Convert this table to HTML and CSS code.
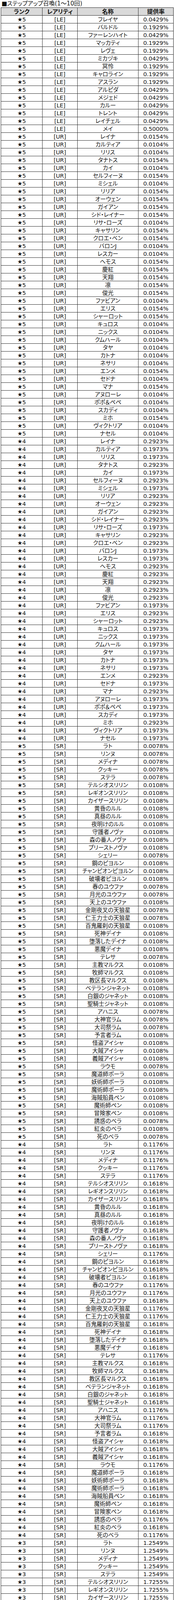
FILE: index.html
```html
<!DOCTYPE html>
<html lang="ja">
<head>
<meta charset="utf-8">
<title>ステップアップ召喚(1～10回)</title>
<link rel="stylesheet" href="styles.css">
</head>
<body>
<h2 class="title">■ステップアップ召喚(1～10回)</h2>
<div class="rates" role="table">
<div class="r head" role="row"><span role="columnheader">ランク</span><span role="columnheader">レアリティ</span><span role="columnheader">名称</span><span role="columnheader">提供率</span></div>
<div class="r" role="row"><span>★5</span><span>[LE]</span><span>フレイヤ</span><span>0.0429%</span></div>
<div class="r" role="row"><span>★5</span><span>[LE]</span><span>バルドル</span><span>0.1929%</span></div>
<div class="r" role="row"><span>★5</span><span>[LE]</span><span>ファーレンハイト</span><span>0.0429%</span></div>
<div class="r" role="row"><span>★5</span><span>[LE]</span><span>マッカティ</span><span>0.1929%</span></div>
<div class="r" role="row"><span>★5</span><span>[LE]</span><span>レヴェ</span><span>0.1929%</span></div>
<div class="r" role="row"><span>★5</span><span>[LE]</span><span>ミカヅキ</span><span>0.0429%</span></div>
<div class="r" role="row"><span>★5</span><span>[LE]</span><span>冥怜</span><span>0.1929%</span></div>
<div class="r" role="row"><span>★5</span><span>[LE]</span><span>キャロライン</span><span>0.1929%</span></div>
<div class="r" role="row"><span>★5</span><span>[LE]</span><span>アスラン</span><span>0.1929%</span></div>
<div class="r" role="row"><span>★5</span><span>[LE]</span><span>アルピダ</span><span>0.0429%</span></div>
<div class="r" role="row"><span>★5</span><span>[LE]</span><span>メジェド</span><span>0.0429%</span></div>
<div class="r" role="row"><span>★5</span><span>[LE]</span><span>カルー</span><span>0.0429%</span></div>
<div class="r" role="row"><span>★5</span><span>[LE]</span><span>トレント</span><span>0.0429%</span></div>
<div class="r" role="row"><span>★5</span><span>[LE]</span><span>レイチェル</span><span>0.0429%</span></div>
<div class="r" role="row"><span>★5</span><span>[LE]</span><span>メイ</span><span>0.5000%</span></div>
<div class="r" role="row"><span>★5</span><span>[UR]</span><span>レイナ</span><span>0.0154%</span></div>
<div class="r" role="row"><span>★5</span><span>[UR]</span><span>カルティア</span><span>0.0104%</span></div>
<div class="r" role="row"><span>★5</span><span>[UR]</span><span>リリス</span><span>0.0104%</span></div>
<div class="r" role="row"><span>★5</span><span>[UR]</span><span>タナトス</span><span>0.0154%</span></div>
<div class="r" role="row"><span>★5</span><span>[UR]</span><span>カイ</span><span>0.0104%</span></div>
<div class="r" role="row"><span>★5</span><span>[UR]</span><span>セルフィーヌ</span><span>0.0154%</span></div>
<div class="r" role="row"><span>★5</span><span>[UR]</span><span>ミシェル</span><span>0.0104%</span></div>
<div class="r" role="row"><span>★5</span><span>[UR]</span><span>リリア</span><span>0.0154%</span></div>
<div class="r" role="row"><span>★5</span><span>[UR]</span><span>オーウェン</span><span>0.0154%</span></div>
<div class="r" role="row"><span>★5</span><span>[UR]</span><span>ガイアン</span><span>0.0154%</span></div>
<div class="r" role="row"><span>★5</span><span>[UR]</span><span>シド・レイナー</span><span>0.0154%</span></div>
<div class="r" role="row"><span>★5</span><span>[UR]</span><span>リサ・ローズ</span><span>0.0104%</span></div>
<div class="r" role="row"><span>★5</span><span>[UR]</span><span>キャサリン</span><span>0.0154%</span></div>
<div class="r" role="row"><span>★5</span><span>[UR]</span><span>クロエ・ベン</span><span>0.0154%</span></div>
<div class="r" role="row"><span>★5</span><span>[UR]</span><span>バロンJ</span><span>0.0104%</span></div>
<div class="r" role="row"><span>★5</span><span>[UR]</span><span>レスカー</span><span>0.0104%</span></div>
<div class="r" role="row"><span>★5</span><span>[UR]</span><span>ヘモス</span><span>0.0154%</span></div>
<div class="r" role="row"><span>★5</span><span>[UR]</span><span>慶紅</span><span>0.0154%</span></div>
<div class="r" role="row"><span>★5</span><span>[UR]</span><span>天翔</span><span>0.0154%</span></div>
<div class="r" role="row"><span>★5</span><span>[UR]</span><span>凛</span><span>0.0154%</span></div>
<div class="r" role="row"><span>★5</span><span>[UR]</span><span>俊光</span><span>0.0154%</span></div>
<div class="r" role="row"><span>★5</span><span>[UR]</span><span>ファビアン</span><span>0.0104%</span></div>
<div class="r" role="row"><span>★5</span><span>[UR]</span><span>エリス</span><span>0.0154%</span></div>
<div class="r" role="row"><span>★5</span><span>[UR]</span><span>シャーロット</span><span>0.0154%</span></div>
<div class="r" role="row"><span>★5</span><span>[UR]</span><span>キュロス</span><span>0.0104%</span></div>
<div class="r" role="row"><span>★5</span><span>[UR]</span><span>ニックス</span><span>0.0104%</span></div>
<div class="r" role="row"><span>★5</span><span>[UR]</span><span>クムハール</span><span>0.0104%</span></div>
<div class="r" role="row"><span>★5</span><span>[UR]</span><span>タヤ</span><span>0.0104%</span></div>
<div class="r" role="row"><span>★5</span><span>[UR]</span><span>カトナ</span><span>0.0104%</span></div>
<div class="r" role="row"><span>★5</span><span>[UR]</span><span>ネサリ</span><span>0.0104%</span></div>
<div class="r" role="row"><span>★5</span><span>[UR]</span><span>エンメ</span><span>0.0154%</span></div>
<div class="r" role="row"><span>★5</span><span>[UR]</span><span>セドナ</span><span>0.0104%</span></div>
<div class="r" role="row"><span>★5</span><span>[UR]</span><span>マナ</span><span>0.0154%</span></div>
<div class="r" role="row"><span>★5</span><span>[UR]</span><span>アヌローレ</span><span>0.0104%</span></div>
<div class="r" role="row"><span>★5</span><span>[UR]</span><span>ポポ＆ペペ</span><span>0.0104%</span></div>
<div class="r" role="row"><span>★5</span><span>[UR]</span><span>スカディ</span><span>0.0104%</span></div>
<div class="r" role="row"><span>★5</span><span>[UR]</span><span>ミホ</span><span>0.0154%</span></div>
<div class="r" role="row"><span>★5</span><span>[UR]</span><span>ヴィクトリア</span><span>0.0104%</span></div>
<div class="r" role="row"><span>★5</span><span>[UR]</span><span>ナセル</span><span>0.0104%</span></div>
<div class="r" role="row"><span>★4</span><span>[UR]</span><span>レイナ</span><span>0.2923%</span></div>
<div class="r" role="row"><span>★4</span><span>[UR]</span><span>カルティア</span><span>0.1973%</span></div>
<div class="r" role="row"><span>★4</span><span>[UR]</span><span>リリス</span><span>0.1973%</span></div>
<div class="r" role="row"><span>★4</span><span>[UR]</span><span>タナトス</span><span>0.2923%</span></div>
<div class="r" role="row"><span>★4</span><span>[UR]</span><span>カイ</span><span>0.1973%</span></div>
<div class="r" role="row"><span>★4</span><span>[UR]</span><span>セルフィーヌ</span><span>0.2923%</span></div>
<div class="r" role="row"><span>★4</span><span>[UR]</span><span>ミシェル</span><span>0.1973%</span></div>
<div class="r" role="row"><span>★4</span><span>[UR]</span><span>リリア</span><span>0.2923%</span></div>
<div class="r" role="row"><span>★4</span><span>[UR]</span><span>オーウェン</span><span>0.2923%</span></div>
<div class="r" role="row"><span>★4</span><span>[UR]</span><span>ガイアン</span><span>0.2923%</span></div>
<div class="r" role="row"><span>★4</span><span>[UR]</span><span>シド・レイナー</span><span>0.2923%</span></div>
<div class="r" role="row"><span>★4</span><span>[UR]</span><span>リサ・ローズ</span><span>0.1973%</span></div>
<div class="r" role="row"><span>★4</span><span>[UR]</span><span>キャサリン</span><span>0.2923%</span></div>
<div class="r" role="row"><span>★4</span><span>[UR]</span><span>クロエ・ベン</span><span>0.2923%</span></div>
<div class="r" role="row"><span>★4</span><span>[UR]</span><span>バロンJ</span><span>0.1973%</span></div>
<div class="r" role="row"><span>★4</span><span>[UR]</span><span>レスカー</span><span>0.1973%</span></div>
<div class="r" role="row"><span>★4</span><span>[UR]</span><span>ヘモス</span><span>0.2923%</span></div>
<div class="r" role="row"><span>★4</span><span>[UR]</span><span>慶紅</span><span>0.2923%</span></div>
<div class="r" role="row"><span>★4</span><span>[UR]</span><span>天翔</span><span>0.2923%</span></div>
<div class="r" role="row"><span>★4</span><span>[UR]</span><span>凛</span><span>0.2923%</span></div>
<div class="r" role="row"><span>★4</span><span>[UR]</span><span>俊光</span><span>0.2923%</span></div>
<div class="r" role="row"><span>★4</span><span>[UR]</span><span>ファビアン</span><span>0.1973%</span></div>
<div class="r" role="row"><span>★4</span><span>[UR]</span><span>エリス</span><span>0.2923%</span></div>
<div class="r" role="row"><span>★4</span><span>[UR]</span><span>シャーロット</span><span>0.2923%</span></div>
<div class="r" role="row"><span>★4</span><span>[UR]</span><span>キュロス</span><span>0.1973%</span></div>
<div class="r" role="row"><span>★4</span><span>[UR]</span><span>ニックス</span><span>0.1973%</span></div>
<div class="r" role="row"><span>★4</span><span>[UR]</span><span>クムハール</span><span>0.1973%</span></div>
<div class="r" role="row"><span>★4</span><span>[UR]</span><span>タヤ</span><span>0.1973%</span></div>
<div class="r" role="row"><span>★4</span><span>[UR]</span><span>カトナ</span><span>0.1973%</span></div>
<div class="r" role="row"><span>★4</span><span>[UR]</span><span>ネサリ</span><span>0.1973%</span></div>
<div class="r" role="row"><span>★4</span><span>[UR]</span><span>エンメ</span><span>0.2923%</span></div>
<div class="r" role="row"><span>★4</span><span>[UR]</span><span>セドナ</span><span>0.1973%</span></div>
<div class="r" role="row"><span>★4</span><span>[UR]</span><span>マナ</span><span>0.2923%</span></div>
<div class="r" role="row"><span>★4</span><span>[UR]</span><span>アヌローレ</span><span>0.1973%</span></div>
<div class="r" role="row"><span>★4</span><span>[UR]</span><span>ポポ＆ペペ</span><span>0.1973%</span></div>
<div class="r" role="row"><span>★4</span><span>[UR]</span><span>スカディ</span><span>0.1973%</span></div>
<div class="r" role="row"><span>★4</span><span>[UR]</span><span>ミホ</span><span>0.2923%</span></div>
<div class="r" role="row"><span>★4</span><span>[UR]</span><span>ヴィクトリア</span><span>0.1973%</span></div>
<div class="r" role="row"><span>★4</span><span>[UR]</span><span>ナセル</span><span>0.1973%</span></div>
<div class="r" role="row"><span>★5</span><span>[SR]</span><span>ラト</span><span>0.0078%</span></div>
<div class="r" role="row"><span>★5</span><span>[SR]</span><span>リンヌ</span><span>0.0078%</span></div>
<div class="r" role="row"><span>★5</span><span>[SR]</span><span>メディナ</span><span>0.0078%</span></div>
<div class="r" role="row"><span>★5</span><span>[SR]</span><span>クッキー</span><span>0.0078%</span></div>
<div class="r" role="row"><span>★5</span><span>[SR]</span><span>ステラ</span><span>0.0078%</span></div>
<div class="r" role="row"><span>★5</span><span>[SR]</span><span>テルシオスリリン</span><span>0.0108%</span></div>
<div class="r" role="row"><span>★5</span><span>[SR]</span><span>レギオンスリリン</span><span>0.0108%</span></div>
<div class="r" role="row"><span>★5</span><span>[SR]</span><span>カイザースリリン</span><span>0.0108%</span></div>
<div class="r" role="row"><span>★5</span><span>[SR]</span><span>黄昏のルル</span><span>0.0108%</span></div>
<div class="r" role="row"><span>★5</span><span>[SR]</span><span>真昼のルル</span><span>0.0108%</span></div>
<div class="r" role="row"><span>★5</span><span>[SR]</span><span>夜明けのルル</span><span>0.0108%</span></div>
<div class="r" role="row"><span>★5</span><span>[SR]</span><span>守護者ノヴァ</span><span>0.0108%</span></div>
<div class="r" role="row"><span>★5</span><span>[SR]</span><span>森の番人ノヴァ</span><span>0.0108%</span></div>
<div class="r" role="row"><span>★5</span><span>[SR]</span><span>プリーストノヴァ</span><span>0.0108%</span></div>
<div class="r" role="row"><span>★5</span><span>[SR]</span><span>シェリー</span><span>0.0078%</span></div>
<div class="r" role="row"><span>★5</span><span>[SR]</span><span>鋼のピヨルン</span><span>0.0108%</span></div>
<div class="r" role="row"><span>★5</span><span>[SR]</span><span>チャンピオンピヨルン</span><span>0.0108%</span></div>
<div class="r" role="row"><span>★5</span><span>[SR]</span><span>破壊者ピヨルン</span><span>0.0108%</span></div>
<div class="r" role="row"><span>★5</span><span>[SR]</span><span>春のユウファ</span><span>0.0078%</span></div>
<div class="r" role="row"><span>★5</span><span>[SR]</span><span>月光のユウファ</span><span>0.0078%</span></div>
<div class="r" role="row"><span>★5</span><span>[SR]</span><span>天上のユウファ</span><span>0.0108%</span></div>
<div class="r" role="row"><span>★5</span><span>[SR]</span><span>金剛夜叉の天狼星</span><span>0.0078%</span></div>
<div class="r" role="row"><span>★5</span><span>[SR]</span><span>仁王力士の天狼星</span><span>0.0078%</span></div>
<div class="r" role="row"><span>★5</span><span>[SR]</span><span>百鬼羅刹の天狼星</span><span>0.0108%</span></div>
<div class="r" role="row"><span>★5</span><span>[SR]</span><span>死神デイナ</span><span>0.0108%</span></div>
<div class="r" role="row"><span>★5</span><span>[SR]</span><span>堕落したデイナ</span><span>0.0108%</span></div>
<div class="r" role="row"><span>★5</span><span>[SR]</span><span>悪魔デイナ</span><span>0.0108%</span></div>
<div class="r" role="row"><span>★5</span><span>[SR]</span><span>テレサ</span><span>0.0078%</span></div>
<div class="r" role="row"><span>★5</span><span>[SR]</span><span>主教マルクス</span><span>0.0108%</span></div>
<div class="r" role="row"><span>★5</span><span>[SR]</span><span>牧師マルクス</span><span>0.0108%</span></div>
<div class="r" role="row"><span>★5</span><span>[SR]</span><span>教区長マルクス</span><span>0.0108%</span></div>
<div class="r" role="row"><span>★5</span><span>[SR]</span><span>ベテランジャネット</span><span>0.0108%</span></div>
<div class="r" role="row"><span>★5</span><span>[SR]</span><span>白銀のジャネット</span><span>0.0108%</span></div>
<div class="r" role="row"><span>★5</span><span>[SR]</span><span>聖騎士ジャネット</span><span>0.0108%</span></div>
<div class="r" role="row"><span>★5</span><span>[SR]</span><span>アハニス</span><span>0.0078%</span></div>
<div class="r" role="row"><span>★5</span><span>[SR]</span><span>大神官ラム</span><span>0.0078%</span></div>
<div class="r" role="row"><span>★5</span><span>[SR]</span><span>大司祭ラム</span><span>0.0078%</span></div>
<div class="r" role="row"><span>★5</span><span>[SR]</span><span>予言者ラム</span><span>0.0108%</span></div>
<div class="r" role="row"><span>★5</span><span>[SR]</span><span>怪盗アイシャ</span><span>0.0108%</span></div>
<div class="r" role="row"><span>★5</span><span>[SR]</span><span>大賊アイシャ</span><span>0.0108%</span></div>
<div class="r" role="row"><span>★5</span><span>[SR]</span><span>義賊アイシャ</span><span>0.0108%</span></div>
<div class="r" role="row"><span>★5</span><span>[SR]</span><span>ラウモ</span><span>0.0078%</span></div>
<div class="r" role="row"><span>★5</span><span>[SR]</span><span>魔道師ポーラ</span><span>0.0108%</span></div>
<div class="r" role="row"><span>★5</span><span>[SR]</span><span>妖術師ポーラ</span><span>0.0108%</span></div>
<div class="r" role="row"><span>★5</span><span>[SR]</span><span>魔術師ポーラ</span><span>0.0108%</span></div>
<div class="r" role="row"><span>★5</span><span>[SR]</span><span>海賊船員ペン</span><span>0.0108%</span></div>
<div class="r" role="row"><span>★5</span><span>[SR]</span><span>魔術師ペン</span><span>0.0108%</span></div>
<div class="r" role="row"><span>★5</span><span>[SR]</span><span>冒険家ペン</span><span>0.0108%</span></div>
<div class="r" role="row"><span>★5</span><span>[SR]</span><span>誘惑のベラ</span><span>0.0078%</span></div>
<div class="r" role="row"><span>★5</span><span>[SR]</span><span>紅炎のベラ</span><span>0.0108%</span></div>
<div class="r" role="row"><span>★5</span><span>[SR]</span><span>死のベラ</span><span>0.0078%</span></div>
<div class="r" role="row"><span>★4</span><span>[SR]</span><span>ラト</span><span>0.1176%</span></div>
<div class="r" role="row"><span>★4</span><span>[SR]</span><span>リンヌ</span><span>0.1176%</span></div>
<div class="r" role="row"><span>★4</span><span>[SR]</span><span>メディナ</span><span>0.1176%</span></div>
<div class="r" role="row"><span>★4</span><span>[SR]</span><span>クッキー</span><span>0.1176%</span></div>
<div class="r" role="row"><span>★4</span><span>[SR]</span><span>ステラ</span><span>0.1176%</span></div>
<div class="r" role="row"><span>★4</span><span>[SR]</span><span>テルシオスリリン</span><span>0.1618%</span></div>
<div class="r" role="row"><span>★4</span><span>[SR]</span><span>レギオンスリリン</span><span>0.1618%</span></div>
<div class="r" role="row"><span>★4</span><span>[SR]</span><span>カイザースリリン</span><span>0.1618%</span></div>
<div class="r" role="row"><span>★4</span><span>[SR]</span><span>黄昏のルル</span><span>0.1618%</span></div>
<div class="r" role="row"><span>★4</span><span>[SR]</span><span>真昼のルル</span><span>0.1618%</span></div>
<div class="r" role="row"><span>★4</span><span>[SR]</span><span>夜明けのルル</span><span>0.1618%</span></div>
<div class="r" role="row"><span>★4</span><span>[SR]</span><span>守護者ノヴァ</span><span>0.1618%</span></div>
<div class="r" role="row"><span>★4</span><span>[SR]</span><span>森の番人ノヴァ</span><span>0.1618%</span></div>
<div class="r" role="row"><span>★4</span><span>[SR]</span><span>プリーストノヴァ</span><span>0.1618%</span></div>
<div class="r" role="row"><span>★4</span><span>[SR]</span><span>シェリー</span><span>0.1176%</span></div>
<div class="r" role="row"><span>★4</span><span>[SR]</span><span>鋼のピヨルン</span><span>0.1618%</span></div>
<div class="r" role="row"><span>★4</span><span>[SR]</span><span>チャンピオンピヨルン</span><span>0.1618%</span></div>
<div class="r" role="row"><span>★4</span><span>[SR]</span><span>破壊者ピヨルン</span><span>0.1618%</span></div>
<div class="r" role="row"><span>★4</span><span>[SR]</span><span>春のユウファ</span><span>0.1176%</span></div>
<div class="r" role="row"><span>★4</span><span>[SR]</span><span>月光のユウファ</span><span>0.1176%</span></div>
<div class="r" role="row"><span>★4</span><span>[SR]</span><span>天上のユウファ</span><span>0.1618%</span></div>
<div class="r" role="row"><span>★4</span><span>[SR]</span><span>金剛夜叉の天狼星</span><span>0.1176%</span></div>
<div class="r" role="row"><span>★4</span><span>[SR]</span><span>仁王力士の天狼星</span><span>0.1176%</span></div>
<div class="r" role="row"><span>★4</span><span>[SR]</span><span>百鬼羅刹の天狼星</span><span>0.1618%</span></div>
<div class="r" role="row"><span>★4</span><span>[SR]</span><span>死神デイナ</span><span>0.1618%</span></div>
<div class="r" role="row"><span>★4</span><span>[SR]</span><span>堕落したデイナ</span><span>0.1618%</span></div>
<div class="r" role="row"><span>★4</span><span>[SR]</span><span>悪魔デイナ</span><span>0.1618%</span></div>
<div class="r" role="row"><span>★4</span><span>[SR]</span><span>テレサ</span><span>0.1176%</span></div>
<div class="r" role="row"><span>★4</span><span>[SR]</span><span>主教マルクス</span><span>0.1618%</span></div>
<div class="r" role="row"><span>★4</span><span>[SR]</span><span>牧師マルクス</span><span>0.1618%</span></div>
<div class="r" role="row"><span>★4</span><span>[SR]</span><span>教区長マルクス</span><span>0.1618%</span></div>
<div class="r" role="row"><span>★4</span><span>[SR]</span><span>ベテランジャネット</span><span>0.1618%</span></div>
<div class="r" role="row"><span>★4</span><span>[SR]</span><span>白銀のジャネット</span><span>0.1618%</span></div>
<div class="r" role="row"><span>★4</span><span>[SR]</span><span>聖騎士ジャネット</span><span>0.1618%</span></div>
<div class="r" role="row"><span>★4</span><span>[SR]</span><span>アハニス</span><span>0.1176%</span></div>
<div class="r" role="row"><span>★4</span><span>[SR]</span><span>大神官ラム</span><span>0.1176%</span></div>
<div class="r" role="row"><span>★4</span><span>[SR]</span><span>大司祭ラム</span><span>0.1176%</span></div>
<div class="r" role="row"><span>★4</span><span>[SR]</span><span>予言者ラム</span><span>0.1618%</span></div>
<div class="r" role="row"><span>★4</span><span>[SR]</span><span>怪盗アイシャ</span><span>0.1618%</span></div>
<div class="r" role="row"><span>★4</span><span>[SR]</span><span>大賊アイシャ</span><span>0.1618%</span></div>
<div class="r" role="row"><span>★4</span><span>[SR]</span><span>義賊アイシャ</span><span>0.1618%</span></div>
<div class="r" role="row"><span>★4</span><span>[SR]</span><span>ラウモ</span><span>0.1176%</span></div>
<div class="r" role="row"><span>★4</span><span>[SR]</span><span>魔道師ポーラ</span><span>0.1618%</span></div>
<div class="r" role="row"><span>★4</span><span>[SR]</span><span>妖術師ポーラ</span><span>0.1618%</span></div>
<div class="r" role="row"><span>★4</span><span>[SR]</span><span>魔術師ポーラ</span><span>0.1618%</span></div>
<div class="r" role="row"><span>★4</span><span>[SR]</span><span>海賊船員ペン</span><span>0.1618%</span></div>
<div class="r" role="row"><span>★4</span><span>[SR]</span><span>魔術師ペン</span><span>0.1618%</span></div>
<div class="r" role="row"><span>★4</span><span>[SR]</span><span>冒険家ペン</span><span>0.1618%</span></div>
<div class="r" role="row"><span>★4</span><span>[SR]</span><span>誘惑のベラ</span><span>0.1176%</span></div>
<div class="r" role="row"><span>★4</span><span>[SR]</span><span>紅炎のベラ</span><span>0.1618%</span></div>
<div class="r" role="row"><span>★4</span><span>[SR]</span><span>死のベラ</span><span>0.1176%</span></div>
<div class="r" role="row"><span>★3</span><span>[SR]</span><span>ラト</span><span>1.2549%</span></div>
<div class="r" role="row"><span>★3</span><span>[SR]</span><span>リンヌ</span><span>1.2549%</span></div>
<div class="r" role="row"><span>★3</span><span>[SR]</span><span>メディナ</span><span>1.2549%</span></div>
<div class="r" role="row"><span>★3</span><span>[SR]</span><span>クッキー</span><span>1.2549%</span></div>
<div class="r" role="row"><span>★3</span><span>[SR]</span><span>ステラ</span><span>1.2549%</span></div>
<div class="r" role="row"><span>★3</span><span>[SR]</span><span>テルシオスリリン</span><span>1.7255%</span></div>
<div class="r" role="row"><span>★3</span><span>[SR]</span><span>レギオンスリリン</span><span>1.7255%</span></div>
<div class="r" role="row"><span>★3</span><span>[SR]</span><span>カイザースリリン</span><span>1.7255%</span></div>
<div class="r" role="row"><span>★3</span><span>[SR]</span><span>黄昏のルル</span><span>1.7255%</span></div>
<div class="r" role="row"><span>★3</span><span>[SR]</span><span>真昼のルル</span><span>1.7255%</span></div>
<div class="r" role="row"><span>★3</span><span>[SR]</span><span>夜明けのルル</span><span>1.7255%</span></div>
<div class="r" role="row"><span>★3</span><span>[SR]</span><span>守護者ノヴァ</span><span>1.7255%</span></div>
<div class="r" role="row"><span>★3</span><span>[SR]</span><span>森の番人ノヴァ</span><span>1.7255%</span></div>
<div class="r" role="row"><span>★3</span><span>[SR]</span><span>プリーストノヴァ</span><span>1.7255%</span></div>
<div class="r" role="row"><span>★3</span><span>[SR]</span><span>シェリー</span><span>1.2549%</span></div>
<div class="r" role="row"><span>★3</span><span>[SR]</span><span>鋼のピヨルン</span><span>1.7255%</span></div>
<div class="r" role="row"><span>★3</span><span>[SR]</span><span>チャンピオンピヨルン</span><span>1.7255%</span></div>
<div class="r" role="row"><span>★3</span><span>[SR]</span><span>破壊者ピヨルン</span><span>1.7255%</span></div>
<div class="r" role="row"><span>★3</span><span>[SR]</span><span>春のユウファ</span><span>1.2549%</span></div>
<div class="r" role="row"><span>★3</span><span>[SR]</span><span>月光のユウファ</span><span>1.2549%</span></div>
<div class="r tall" role="row"><span>★3</span><span>[SR]</span><span>天上のユウファ</span><span>1.7255%</span></div>
<div class="r tall" role="row"><span>★3</span><span>[SR]</span><span>金剛夜叉の天狼星</span><span>1.2549%</span></div>
<div class="r tall" role="row"><span>★3</span><span>[SR]</span><span>仁王力士の天狼星</span><span>1.2549%</span></div>
<div class="r tall" role="row"><span>★3</span><span>[SR]</span><span>百鬼羅刹の天狼星</span><span>1.7255%</span></div>
<div class="r tall" role="row"><span>★3</span><span>[SR]</span><span>死神デイナ</span><span>1.7255%</span></div>
<div class="r tall" role="row"><span>★3</span><span>[SR]</span><span>堕落したデイナ</span><span>1.7255%</span></div>
<div class="r tall" role="row"><span>★3</span><span>[SR]</span><span>悪魔デイナ</span><span>1.7255%</span></div>
<div class="r tall" role="row"><span>★3</span><span>[SR]</span><span>テレサ</span><span>1.2549%</span></div>
<div class="r tall" role="row"><span>★3</span><span>[SR]</span><span>主教マルクス</span><span>1.7255%</span></div>
<div class="r tall" role="row"><span>★3</span><span>[SR]</span><span>牧師マルクス</span><span>1.7255%</span></div>
<div class="r tall" role="row"><span>★3</span><span>[SR]</span><span>教区長マルクス</span><span>1.7255%</span></div>
<div class="r tall" role="row"><span>★3</span><span>[SR]</span><span>ベテランジャネット</span><span>1.7255%</span></div>
<div class="r tall" role="row"><span>★3</span><span>[SR]</span><span>白銀のジャネット</span><span>1.7255%</span></div>
<div class="r tall" role="row"><span>★3</span><span>[SR]</span><span>聖騎士ジャネット</span><span>1.7255%</span></div>
<div class="r tall" role="row"><span>★3</span><span>[SR]</span><span>アハニス</span><span>1.2549%</span></div>
<div class="r tall" role="row"><span>★3</span><span>[SR]</span><span>大神官ラム</span><span>1.2549%</span></div>
<div class="r tall" role="row"><span>★3</span><span>[SR]</span><span>大司祭ラム</span><span>1.2549%</span></div>
<div class="r tall" role="row"><span>★3</span><span>[SR]</span><span>予言者ラム</span><span>1.7255%</span></div>
<div class="r tall" role="row"><span>★3</span><span>[SR]</span><span>怪盗アイシャ</span><span>1.7255%</span></div>
<div class="r tall" role="row"><span>★3</span><span>[SR]</span><span>大賊アイシャ</span><span>1.7255%</span></div>
<div class="r tall" role="row"><span>★3</span><span>[SR]</span><span>義賊アイシャ</span><span>1.7255%</span></div>
<div class="r tall" role="row"><span>★3</span><span>[SR]</span><span>ラウモ</span><span>1.2549%</span></div>
<div class="r tall" role="row"><span>★3</span><span>[SR]</span><span>魔道師ポーラ</span><span>1.7255%</span></div>
<div class="r tall" role="row"><span>★3</span><span>[SR]</span><span>妖術師ポーラ</span><span>1.7255%</span></div>
<div class="r tall" role="row"><span>★3</span><span>[SR]</span><span>魔術師ポーラ</span><span>1.7255%</span></div>
<div class="r tall" role="row"><span>★3</span><span>[SR]</span><span>海賊船員ペン</span><span>1.7255%</span></div>
<div class="r tall" role="row"><span>★3</span><span>[SR]</span><span>魔術師ペン</span><span>1.7255%</span></div>
<div class="r tall" role="row"><span>★3</span><span>[SR]</span><span>冒険家ペン</span><span>1.7255%</span></div>
<div class="r tall" role="row"><span>★3</span><span>[SR]</span><span>誘惑のベラ</span><span>1.2549%</span></div>
<div class="r tall" role="row"><span>★3</span><span>[SR]</span><span>紅炎のベラ</span><span>1.7255%</span></div>
<div class="r tall" role="row"><span>★3</span><span>[SR]</span><span>死のベラ</span><span>1.2549%</span></div>
</div>
</body>
</html>
```

FILE: styles.css
```css
html, body {
  margin: 0;
  padding: 0;
  background: #ffffff;
}

body {
  color: #111111;
  font-family: "DejaVu Sans", "Noto Sans CJK JP", sans-serif;
}

.title {
  margin: 0;
  padding-left: 4px;
  height: 19px;
  overflow: hidden;
  font-size: 15px;
  line-height: 19px;
  font-weight: normal;
  font-feature-settings: "palt";
  white-space: nowrap;
}

.rates {
  margin-left: 2px;
  width: 443px;
  box-sizing: border-box;
  border-top: 1px solid #2b2b2b;
  border-left: 1px solid #2b2b2b;
  font-size: 14.5px;
  font-feature-settings: "palt";
}

.r {
  display: grid;
  grid-template-columns: 106px 90px 156px 90px;
  height: 20px;
}

.r.tall {
  height: 20.77px;
}

.r > span {
  box-sizing: border-box;
  display: flex;
  align-items: center;
  justify-content: center;
  padding-top: 1px;
  border-right: 1px solid #2b2b2b;
  border-bottom: 1px solid #2b2b2b;
  line-height: 16px;
  white-space: nowrap;
  overflow: hidden;
}

.r.head > span {
  background: #d9d9d9;
  font-size: 15px;
  font-weight: bold;
}
```
